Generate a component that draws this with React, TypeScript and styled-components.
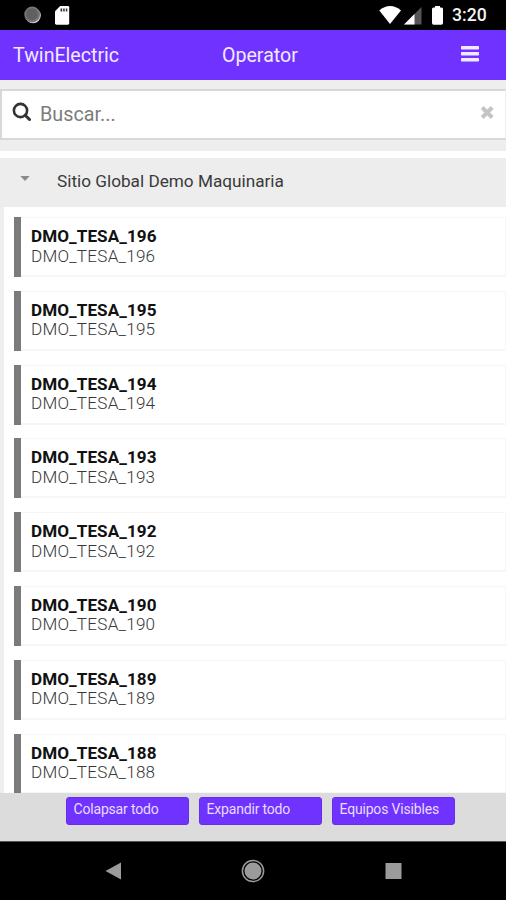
import React from "react";
import styled, { createGlobalStyle } from "styled-components";

const GlobalStyle = createGlobalStyle`
  * { box-sizing: border-box; }
  body { margin: 0; background: #fff; font-family: Roboto, "Liberation Sans", sans-serif; }
`;

const Screen = styled.div`
  width: 506px;
  height: 900px;
  display: flex;
  flex-direction: column;
  overflow: hidden;
  background: #fff;
`;

const StatusBar = styled.div`
  flex: 0 0 29.5px;
  display: flex;
  align-items: center;
  justify-content: space-between;
  padding: 0 18px 0 22px;
  background: #000;
`;

const StatusGroup = styled.div`
  display: flex;
  align-items: center;
`;

const Clock = styled.span`
  margin-left: 8px;
  width: 36px;
  color: #f4f4f4;
  font-size: 17.6px;
  font-weight: 500;
  line-height: 30px;
  white-space: nowrap;
`;

const Header = styled.header`
  flex: 0 0 49.5px;
  display: grid;
  grid-template-columns: 209px 1fr 20px;
  align-items: center;
  padding: 2px 26px 0 13px;
  background: #7033ff;
  color: #f1eaff;
`;

const Brand = styled.span`
  font-size: 19.6px;
  line-height: 24px;
`;

const MenuButton = styled.button`
  display: flex;
  padding: 0 0 3px;
  border: 0;
  background: none;
`;

const SearchArea = styled.div`
  flex: 0 0 71px;
  padding-top: 9px;
  background: #eee;
`;

const SearchBox = styled.label`
  height: 51px;
  display: flex;
  align-items: center;
  padding: 0 10px 0 10px;
  border: 2px solid #d8d8d8;
  border-right: 1px solid #eee;
  background: #fff;
`;

const SearchText = styled.span`
  flex: 1;
  margin-left: 8px;
  padding-top: 1px;
  color: #7c7c7c;
  font-size: 19.8px;
  line-height: 24px;
`;

const GroupHeader = styled.div`
  flex: 0 0 49px;
  margin-top: 7px;
  display: flex;
  align-items: center;
  padding: 0 0 2px 20px;
  background: #ededed;
`;

const GroupTitle = styled.span`
  margin-left: 27px;
  color: #3a3a3a;
  font-size: 17.2px;
  line-height: 20px;
  white-space: nowrap;
`;

const List = styled.div`
  flex: 1 1 0;
  min-height: 0;
  overflow: hidden;
  display: flex;
  flex-direction: column;
  gap: 13.8px;
  padding: 10.5px 0 0 10px;
  border-left: 4px solid #eee;
`;

const Card = styled.div`
  flex: 0 0 60px;
  display: flex;
  background: #fff;
`;

const Marker = styled.span`
  flex: 0 0 7px;
  background: #7b7b7b;
`;

const CardBody = styled.div`
  flex: 1;
  padding: 9px 0 0 10px;
  border: solid #f6f6f6;
  border-width: 1px 1px 2px 0;
`;

const Name = styled.div<{ $strong?: boolean }>`
  color: ${(p) => (p.$strong ? "#111" : "#383838")};
  font-size: 17.1px;
  font-weight: ${(p) => (p.$strong ? 700 : 300)};
  letter-spacing: ${(p) => (p.$strong ? "0.07px" : "0.23px")};
  line-height: 19.5px;
`;

const Footer = styled.footer`
  flex: 0 0 49px;
  display: flex;
  justify-content: center;
  gap: 10px;
  padding: 4px 0 0 14px;
  border-bottom: 1px solid #555;
  background: #dcdcdc;
`;

const Action = styled.button`
  width: 123px;
  height: 28px;
  padding: 0 0 4px 7px;
  border: 1px solid #672de8;
  border-radius: 3px;
  background: #7033ff;
  color: #e8dcff;
  font: 400 14px/18px Roboto, sans-serif;
  letter-spacing: -0.18px;
  text-align: left;
  white-space: nowrap;
`;

const NavBar = styled.nav`
  flex: 0 0 58px;
  display: flex;
  align-items: center;
  justify-content: space-between;
  padding: 0 104.5px 0 105px;
  background: #000;
`;

const machines = [196, 195, 194, 193, 192, 190, 189, 188];
const actions = ["Colapsar todo", "Expandir todo", "Equipos Visibles"];

export default function App() {
  return (
    <>
      <GlobalStyle />
      <Screen>
        <StatusBar>
          <StatusGroup>
            <svg width="50" height="30" viewBox="0 0 50 30">
              <circle cx="11" cy="15.500" r="7.800" fill="#dcdcdc" />
              <circle cx="10.200" cy="14.500" r="7.900" fill="#777" />
              <circle cx="10" cy="14.200" r="6" fill="#606060" />
              <path d="M38.200 6H46Q47.200 6 47.200 7.200V23.300Q47.200 24.700 45.800 24.700H34.500Q33 24.700 33 23.300V11.200Z" fill="#fff" />
              <path d="M38.500 8.500h1.700v3h-1.700zM41.200 8.500h1.500v3h-1.500zM43.800 8.500h1.500v3h-1.500z" fill="#333" />
            </svg>
          </StatusGroup>
          <StatusGroup>
            <svg width="65" height="30" viewBox="0 0 65 30">
              <path d="M.3 10.600C6.500 4.600 15.700 4.600 22 10.600L11 24Z" fill="#fff" />
              <path d="M42.500 7V24.500H25Z" fill="#555" />
              <path d="M35.500 14V24.500H25Z" fill="#fff" />
              <path d="M54.500 6h5v1.500h1.500q1.500 0 1.500 1.500v14q0 1.700-1.700 1.700h-7.600q-1.700 0-1.700-1.700v-14q0-1.500 1.500-1.500h1.500Z" fill="#fff" transform="translate(1.500 0)" />
            </svg>
            <Clock>3:20</Clock>
          </StatusGroup>
        </StatusBar>
        <Header>
          <Brand>TwinElectric</Brand>
          <Brand>Operator</Brand>
          <MenuButton aria-label="Menu">
            <svg width="20" height="18" viewBox="0 0 20 18" fill="#f1eaff">
              <rect x="1" y="1" width="18" height="3.500" rx=".8" />
              <rect x="1" y="7" width="18" height="3.500" rx=".8" />
              <rect x="1" y="13" width="18" height="3.500" rx=".8" />
            </svg>
          </MenuButton>
        </Header>
        <SearchArea>
          <SearchBox>
            <svg width="20" height="24" viewBox="0 0 20 24" fill="none" stroke="#333">
              <circle cx="8.500" cy="8.500" r="6.600" strokeWidth="2.600" />
              <path d="M13.200 13.200L17.500 17.500" strokeWidth="3" strokeLinecap="round" />
            </svg>
            <SearchText>Buscar...</SearchText>
            <svg width="16" height="22" viewBox="0 0 16 22">
              <path d="M3.200 4.500L13.200 14.500M13.200 4.500L3.200 14.500" stroke="#c4c4c4" strokeWidth="4" />
            </svg>
          </SearchBox>
        </SearchArea>
        <GroupHeader>
          <svg width="10" height="10" viewBox="0 0 10 10">
            <path d="M.3 0H9.700L5 5Z" fill="#8a8a8a" />
          </svg>
          <GroupTitle>Sitio Global Demo Maquinaria</GroupTitle>
        </GroupHeader>
        <List>
          {machines.map((id) => (
            <Card key={id}>
              <Marker />
              <CardBody>
                <Name $strong>DMO_TESA_{id}</Name>
                <Name>DMO_TESA_{id}</Name>
              </CardBody>
            </Card>
          ))}
        </List>
        <Footer>
          {actions.map((label) => (
            <Action key={label}>{label}</Action>
          ))}
        </Footer>
        <NavBar>
          <svg width="17" height="20" viewBox="0 0 17 20">
            <path d="M.5 10L16 1.500V18.500Z" fill="#9b9b9b" />
          </svg>
          <svg width="26" height="26" viewBox="0 0 26 26">
            <circle cx="13" cy="13" r="10.600" fill="none" stroke="#9b9b9b" strokeWidth="1.500" />
            <circle cx="13" cy="13" r="8.500" fill="#9b9b9b" />
          </svg>
          <svg width="17" height="18" viewBox="0 0 17 18">
            <rect x=".5" y="1" width="16" height="16" fill="#9b9b9b" />
          </svg>
        </NavBar>
      </Screen>
    </>
  );
}
